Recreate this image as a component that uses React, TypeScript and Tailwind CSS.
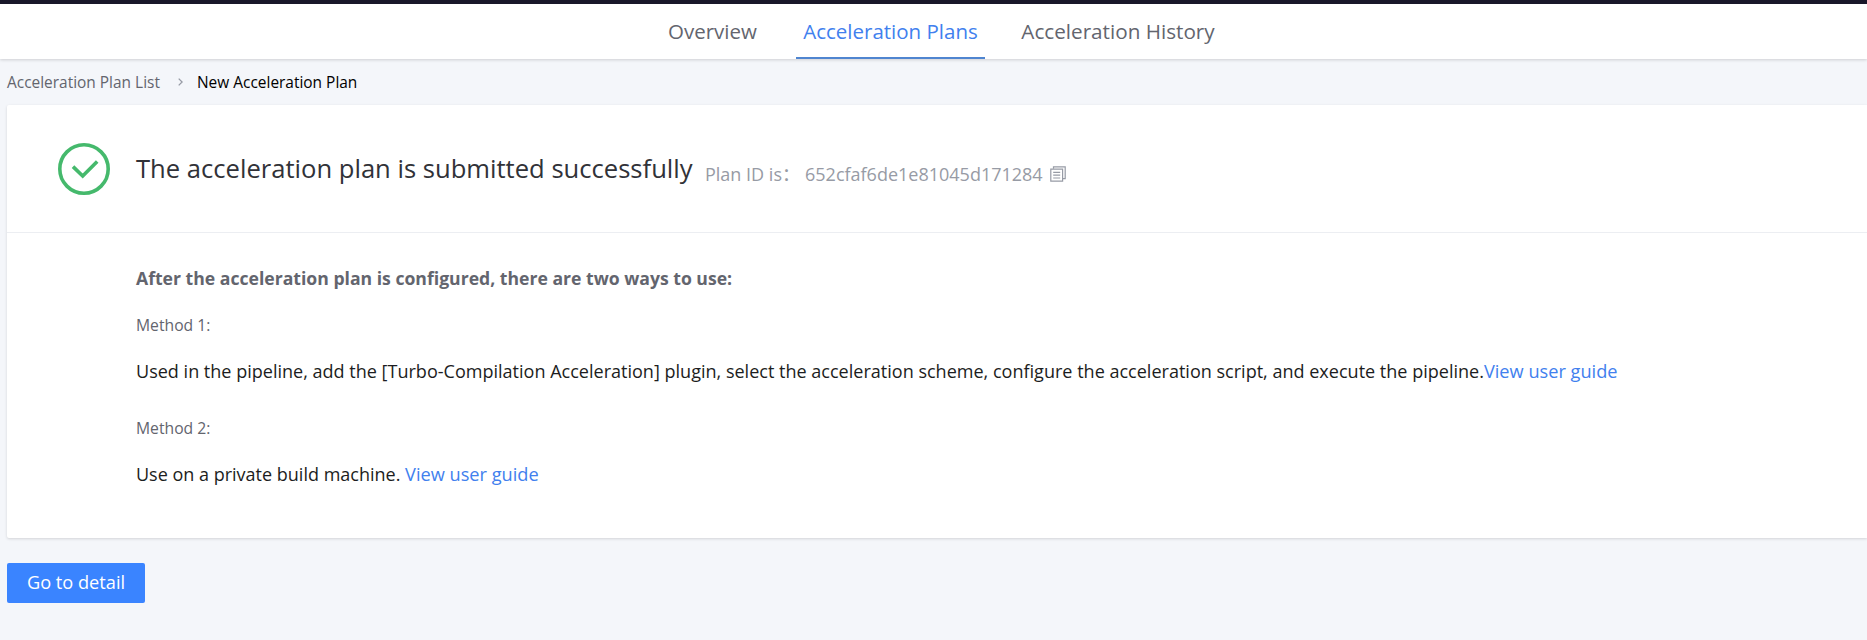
import React from "react";

const tabs = [
  { label: "Overview", active: false, className: "w-[101px] text-[20.5px]" },
  { label: "Acceleration Plans", active: true, className: "w-[189px] text-[20.5px]" },
  { label: "Acceleration History", active: false, className: "w-[200px] text-[20.7px]" },
];

function Header() {
  return (
    <header className="relative h-[59px] border-t-4 border-[#19172a] bg-white shadow-[0_1px_3px_rgba(0,0,0,0.16)]">
      <nav className="flex h-[55px] gap-[33px] pl-[662px]">
        {tabs.map((tab) => (
          <a
            key={tab.label}
            className={`${tab.className} flex flex-col border-b-2 text-center leading-[54px] whitespace-nowrap ${
              tab.active ? "border-[#4f85d0] text-[#4180ee]" : "border-transparent text-[#63656e]"
            }`}
          >
            {tab.label}
          </a>
        ))}
      </nav>
    </header>
  );
}

function Breadcrumb() {
  return (
    <div className="flex h-[46px] items-center pl-[7px] whitespace-nowrap">
      <span className="w-[171px] pt-0.5 text-[15.45px] text-[#63656e]">Acceleration Plan List</span>
      <svg className="mr-[14px] h-2 w-[5px]" viewBox="0 0 5 8" fill="none" stroke="#979ba5" strokeWidth="1.3">
        <path d="M0.7 0.6 4.1 4 0.7 7.4" />
      </svg>
      <span className="pt-0.5 text-[15.45px] text-black">New Acceleration Plan</span>
    </div>
  );
}

function SuccessIcon() {
  return (
    <svg className="h-[52px] w-[52px]" viewBox="0 0 52 52" fill="none" stroke="#45b96c">
      <circle cx="26" cy="26" r="24.2" strokeWidth="3.6" />
      <path d="M15 23.6 24.7 33 39.2 18.4" strokeWidth="3.6" />
    </svg>
  );
}

function CopyIcon() {
  return (
    <svg className="ml-px h-4 w-4" viewBox="0 0 16 16" fill="none" stroke="#979ba5" strokeWidth="1.2">
      <path d="M3.5 2.8V0.8H15.2V12.7H13" />
      <path d="M0.8 3.2H12.6V15.2H0.8Z" />
      <path d="M3.2 6.4H10.2M3.2 9.2H10.2M3.2 12H10.2" />
    </svg>
  );
}

function GuideLink() {
  return <a className="text-[18.2px] text-[#4180ee]">View user guide</a>;
}

export default function App() {
  return (
    <div className="h-[640px] overflow-hidden bg-[#f4f6fa] font-['Open_Sans','Noto_Sans_CJK_SC',sans-serif]">
      <Header />
      <Breadcrumb />
      <main className="ml-[7px] h-[433px] rounded-l-[2px] bg-white shadow-[0_1px_3px_rgba(0,0,0,0.14)]">
        <section className="flex h-[128px] items-center border-b border-[#eceef2] pl-[51px] whitespace-nowrap">
          <SuccessIcon />
          <h1 className="ml-[26px] w-[569px] pt-0.5 text-[25.6px] text-[#313238]">
            The acceleration plan is submitted successfully
          </h1>
          <div className="flex items-center pt-[11px] text-[18px] leading-6 text-[#979ba5]">
            <span className="w-[100px]">Plan ID is：</span>
            <span className="w-[244px]">652cfaf6de1e81045d171284</span>
            <CopyIcon />
          </div>
        </section>
        <section className="pt-[23px] pl-[129px] whitespace-nowrap">
          <h2 className="text-[17.63px] leading-[44px] font-bold text-[#63656e]">
            After the acceleration plan is configured, there are two ways to use:
          </h2>
          <h3 className="h-12 text-[15.7px] leading-[50px] text-[#63656e]">Method 1:</h3>
          <p className="mb-[9px] h-[46px] text-[18.04px] leading-[46px] text-[#1c1d21]">
            Used in the pipeline, add the [Turbo-Compilation Acceleration] plugin, select the acceleration scheme,
            configure the acceleration script, and execute the pipeline.
            <GuideLink />
          </p>
          <h3 className="h-12 text-[15.7px] leading-[50px] text-[#63656e]">Method 2:</h3>
          <p className="h-[46px] text-[18px] leading-[46px] text-[#1c1d21]">
            Use on a private build machine. <GuideLink />
          </p>
        </section>
      </main>
      <button className="mt-[25px] ml-[7px] h-10 w-[138px] rounded-[2px] bg-[#3a84ff] text-[18.2px] text-white">
        Go to detail
      </button>
    </div>
  );
}
